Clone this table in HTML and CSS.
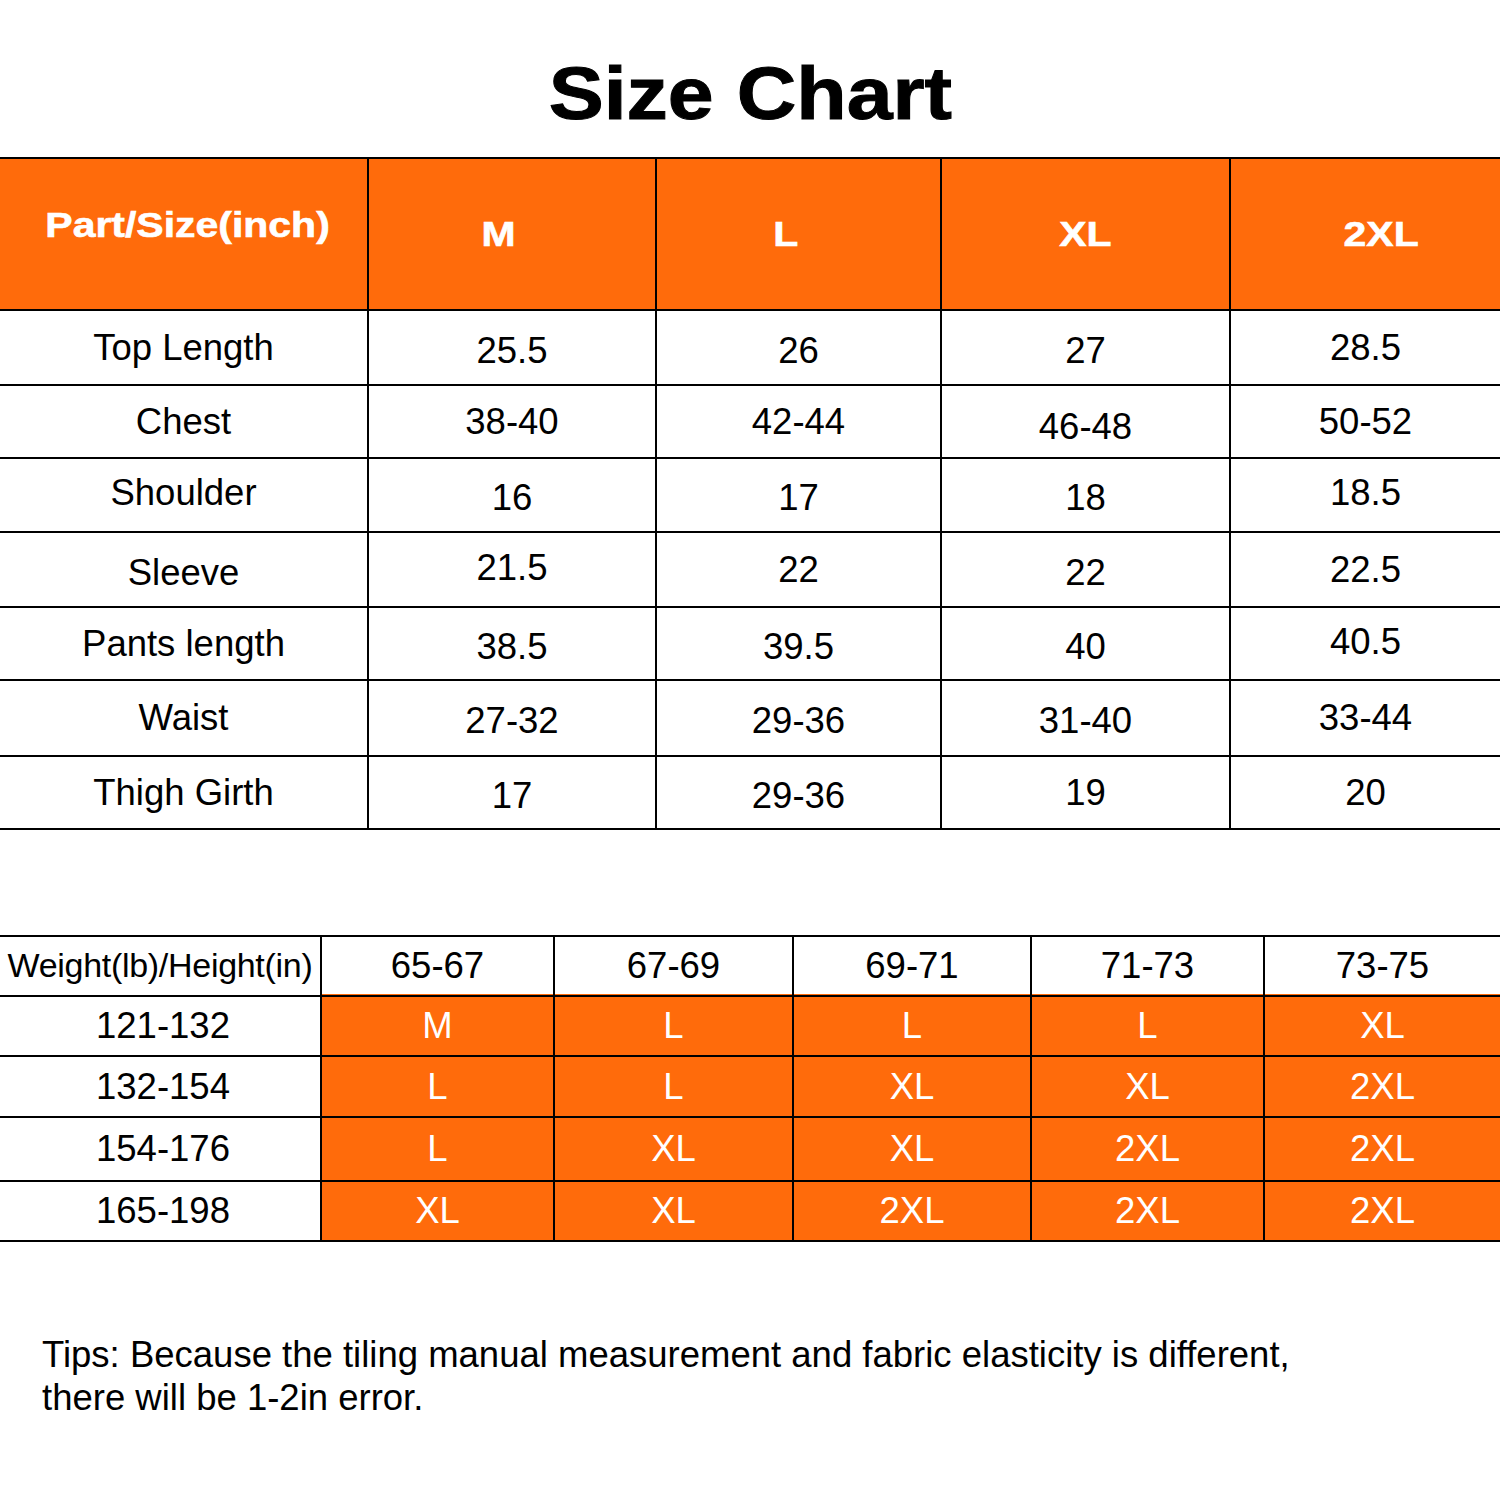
FILE: index.html
```html
<!DOCTYPE html>
<html lang="en">
<head>
<meta charset="utf-8">
<title>Size Chart</title>
<link rel="stylesheet" href="styles.css">
</head>
<body>
<div class="page">
  <h1 class="title"><span>Size Chart</span></h1>

  <div class="chart">
    <div class="cell head head-part"><span>Part/Size(inch)</span></div>
    <div class="cell head shift-l"><span>M</span></div>
    <div class="cell head shift-l"><span>L</span></div>
    <div class="cell head"><span>XL</span></div>
    <div class="cell head shift-r"><span>2XL</span></div>

    <div class="cell">Top Length</div>
    <div class="cell dn">25.5</div>
    <div class="cell dn">26</div>
    <div class="cell dn">27</div>
    <div class="cell">28.5</div>

    <div class="cell">Chest</div>
    <div class="cell">38-40</div>
    <div class="cell">42-44</div>
    <div class="cell dn2">46-48</div>
    <div class="cell">50-52</div>

    <div class="cell up">Shoulder</div>
    <div class="cell dn">16</div>
    <div class="cell dn">17</div>
    <div class="cell dn">18</div>
    <div class="cell up">18.5</div>

    <div class="cell dn">Sleeve</div>
    <div class="cell up">21.5</div>
    <div class="cell">22</div>
    <div class="cell dn">22</div>
    <div class="cell">22.5</div>

    <div class="cell">Pants length</div>
    <div class="cell dn">38.5</div>
    <div class="cell dn">39.5</div>
    <div class="cell dn">40</div>
    <div class="cell up">40.5</div>

    <div class="cell">Waist</div>
    <div class="cell dn">27-32</div>
    <div class="cell dn">29-36</div>
    <div class="cell dn">31-40</div>
    <div class="cell">33-44</div>

    <div class="cell">Thigh Girth</div>
    <div class="cell dn">17</div>
    <div class="cell dn">29-36</div>
    <div class="cell">19</div>
    <div class="cell">20</div>
  </div>

  <div class="fit">
    <div class="cell fit-label">Weight(lb)/Height(in)</div>
    <div class="cell fit-h">65-67</div>
    <div class="cell fit-h">67-69</div>
    <div class="cell fit-h">69-71</div>
    <div class="cell fit-h">71-73</div>
    <div class="cell fit-h">73-75</div>

    <div class="cell fit-w">121-132</div>
    <div class="cell o">M</div>
    <div class="cell o">L</div>
    <div class="cell o">L</div>
    <div class="cell o">L</div>
    <div class="cell o">XL</div>

    <div class="cell fit-w">132-154</div>
    <div class="cell o">L</div>
    <div class="cell o">L</div>
    <div class="cell o">XL</div>
    <div class="cell o">XL</div>
    <div class="cell o">2XL</div>

    <div class="cell fit-w">154-176</div>
    <div class="cell o">L</div>
    <div class="cell o">XL</div>
    <div class="cell o">XL</div>
    <div class="cell o">2XL</div>
    <div class="cell o">2XL</div>

    <div class="cell fit-w">165-198</div>
    <div class="cell o">XL</div>
    <div class="cell o">XL</div>
    <div class="cell o">2XL</div>
    <div class="cell o">2XL</div>
    <div class="cell o">2XL</div>
  </div>

  <p class="tips">Tips: Because the tiling manual measurement and fabric elasticity is different,<br>there will be 1-2in error.</p>
</div>
</body>
</html>
```

FILE: styles.css
```css
html, body {
  margin: 0;
  padding: 0;
  background: #ffffff;
}

body {
  font-family: "Liberation Sans", Arial, sans-serif;
  color: #000000;
}

.page {
  width: 1500px;
}

.title {
  margin: 55px 0 26px;
  font-size: 75px;
  line-height: 76px;
  font-weight: 700;
  text-align: center;
}

.title span {
  display: inline-block;
  transform: scaleX(1.1);
  -webkit-text-stroke: 1px #000000;
}

.chart {
  display: grid;
  grid-template-columns: 367px 286px 283px 287px 269px;
  grid-template-rows: 150px 73px 71px 72px 73px 71px 74px 71px;
  gap: 2px;
  padding: 2px 0;
  background: #000000;
}

.cell {
  display: flex;
  align-items: center;
  justify-content: center;
  background: #ffffff;
  font-size: 36.5px;
  line-height: 1.15;
  white-space: nowrap;
}

.head {
  background: #ff6b0b;
  color: #ffffff;
  font-weight: 700;
  font-size: 35px;
}

.head span {
  display: inline-block;
  transform: scaleX(1.17);
  -webkit-text-stroke: 0.6px #ffffff;
}

.head-part {
  padding: 0 0 18px 8px;
}

.shift-l {
  padding-right: 26px;
}

.shift-r {
  padding-left: 32px;
}

.dn {
  padding-top: 6px;
}

.dn2 {
  padding-top: 10px;
}

.up {
  padding-bottom: 4px;
}

.fit {
  display: grid;
  grid-template-columns: 320px 231px 237px 236px 231px 235px;
  grid-template-rows: 58px 58px 59px 62px 58px;
  gap: 2px;
  padding: 2px 0;
  margin-top: 105px;
  background: #000000;
}

.fit-label {
  font-size: 34px;
  letter-spacing: -0.3px;
}

.fit-w {
  padding-left: 6px;
}

.fit-h {
  box-shadow: inset 0 -1px 0 #ff6b0b;
}

.o {
  background: #ff6b0b;
  color: #ffffff;
}

.tips {
  margin: 91px 0 0;
  padding-left: 42px;
  font-size: 36.5px;
  line-height: 43px;
}
```
